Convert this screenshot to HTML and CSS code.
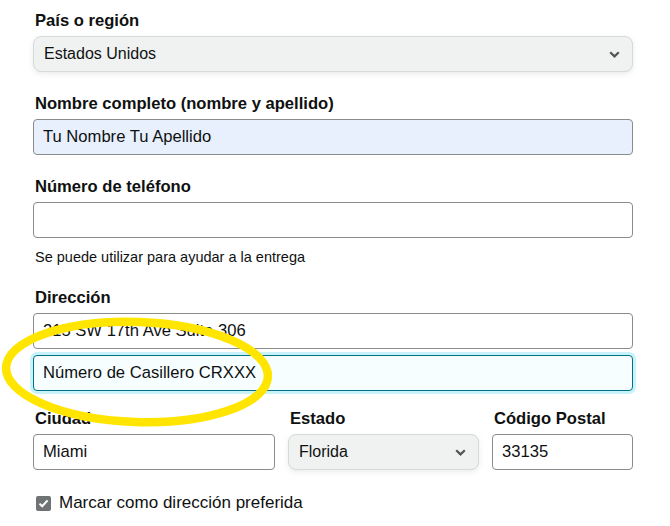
FILE: index.html
```html
<!DOCTYPE html>
<html lang="es">
<head>
    <meta charset="UTF-8">
    <meta name="viewport" content="width=device-width, initial-scale=1.0">
    <title>Agregar una dirección</title>
    <link rel="stylesheet" href="styles.css">
</head>
<body>

    <form class="address-form">
        <div class="field">
            <label class="label">País o región</label>
            <div class="select">
                <span>Estados Unidos</span>
                <svg class="chevron" width="11" height="7" viewBox="0 0 11 7"><path d="M1.2 1.2 L5.5 5.4 L9.8 1.2" fill="none" stroke="#555" stroke-width="2.2"/></svg>
            </div>
        </div>

        <div class="field">
            <label class="label">Nombre completo (nombre y apellido)</label>
            <input class="input autofill" type="text" value="Tu Nombre Tu Apellido">
        </div>

        <div class="field">
            <label class="label">Número de teléfono</label>
            <input class="input" type="text" value="">
            <div class="hint">Se puede utilizar para ayudar a la entrega</div>
        </div>

        <div class="field address">
            <label class="label">Dirección</label>
            <input class="input" type="text" value="215 SW 17th Ave Suite 306">
            <input class="input focused" type="text" value="Número de Casillero CRXXX">
        </div>

        <div class="field-row">
            <div>
                <label class="label">Ciudad</label>
                <input class="input" type="text" value="Miami">
            </div>
            <div>
                <label class="label">Estado</label>
                <div class="select">
                    <span>Florida</span>
                    <svg class="chevron" width="11" height="7" viewBox="0 0 11 7"><path d="M1.2 1.2 L5.5 5.4 L9.8 1.2" fill="none" stroke="#555" stroke-width="2.2"/></svg>
                </div>
            </div>
            <div>
                <label class="label">Código Postal</label>
                <input class="input" type="text" value="33135">
            </div>
        </div>

        <label class="check">
            <span class="box"><svg width="15" height="15" viewBox="0 0 15 15"><path d="M3.5 7.6 L6.2 10.3 L11.6 4.4" fill="none" stroke="#fff" stroke-width="2"/></svg></span>
            Marcar como dirección preferida
        </label>

        <!-- marker circle over the second address line -->
        <svg class="marker" width="282" height="120" viewBox="0 0 282 120">
            <ellipse cx="137" cy="58" rx="131" ry="50" fill="none" stroke="#ffe500" stroke-width="8.5" transform="rotate(2 137 58)"/>
        </svg>
    </form>

</body>
</html>
```

FILE: styles.css
```css
* { box-sizing: border-box; }
body { margin: 0; font-family: "Liberation Sans", Arial, sans-serif; color: #0f1111; background: #fff; }
.address-form { position: relative; width: 600px; margin-left: 33px; padding-top: 9px; }
.field { margin-bottom: 20px; }
.label { display: block; font-size: 16.6px; font-weight: bold; line-height: 23px; margin-bottom: 4px; padding-left: 2px; }
.input { display: block; width: 100%; height: 36px; padding: 0 9px; font-family: inherit; font-size: 16.6px; color: #0f1111; background: #fff; border: 1px solid #888c8c; border-radius: 4px; outline: none; }
.input.autofill { background: #e8f0fe; }
.input.focused { background: #f7feff; border-color: #007185; box-shadow: 0 0 0 3px #c8f3fa; }
.address .input + .input { margin-top: 6px; }
.address { margin-bottom: 16px; }
.select { display: flex; align-items: center; justify-content: space-between; height: 36px; padding: 0 12px 0 10px; font-size: 16px; background: #f0f2f2; border: 1px solid #d5d9d9; border-radius: 8px; box-shadow: 0 2px 5px rgba(213, 217, 217, 0.5); }
.chevron { display: block; }
.hint { font-size: 14.5px; line-height: 18px; margin-top: 10px; padding-left: 2px; }
.field-row { display: grid; grid-template-columns: 242px 191px 141px; column-gap: 13px; }
.check { display: flex; align-items: center; gap: 8px; margin-top: 23px; font-size: 17px; line-height: 20px; padding-left: 3px; }
.box { width: 15px; height: 15px; background: #6f7373; border-radius: 2px; display: block; }
.box svg { display: block; }
.marker { position: absolute; left: -33px; top: 314px; pointer-events: none; }
```
